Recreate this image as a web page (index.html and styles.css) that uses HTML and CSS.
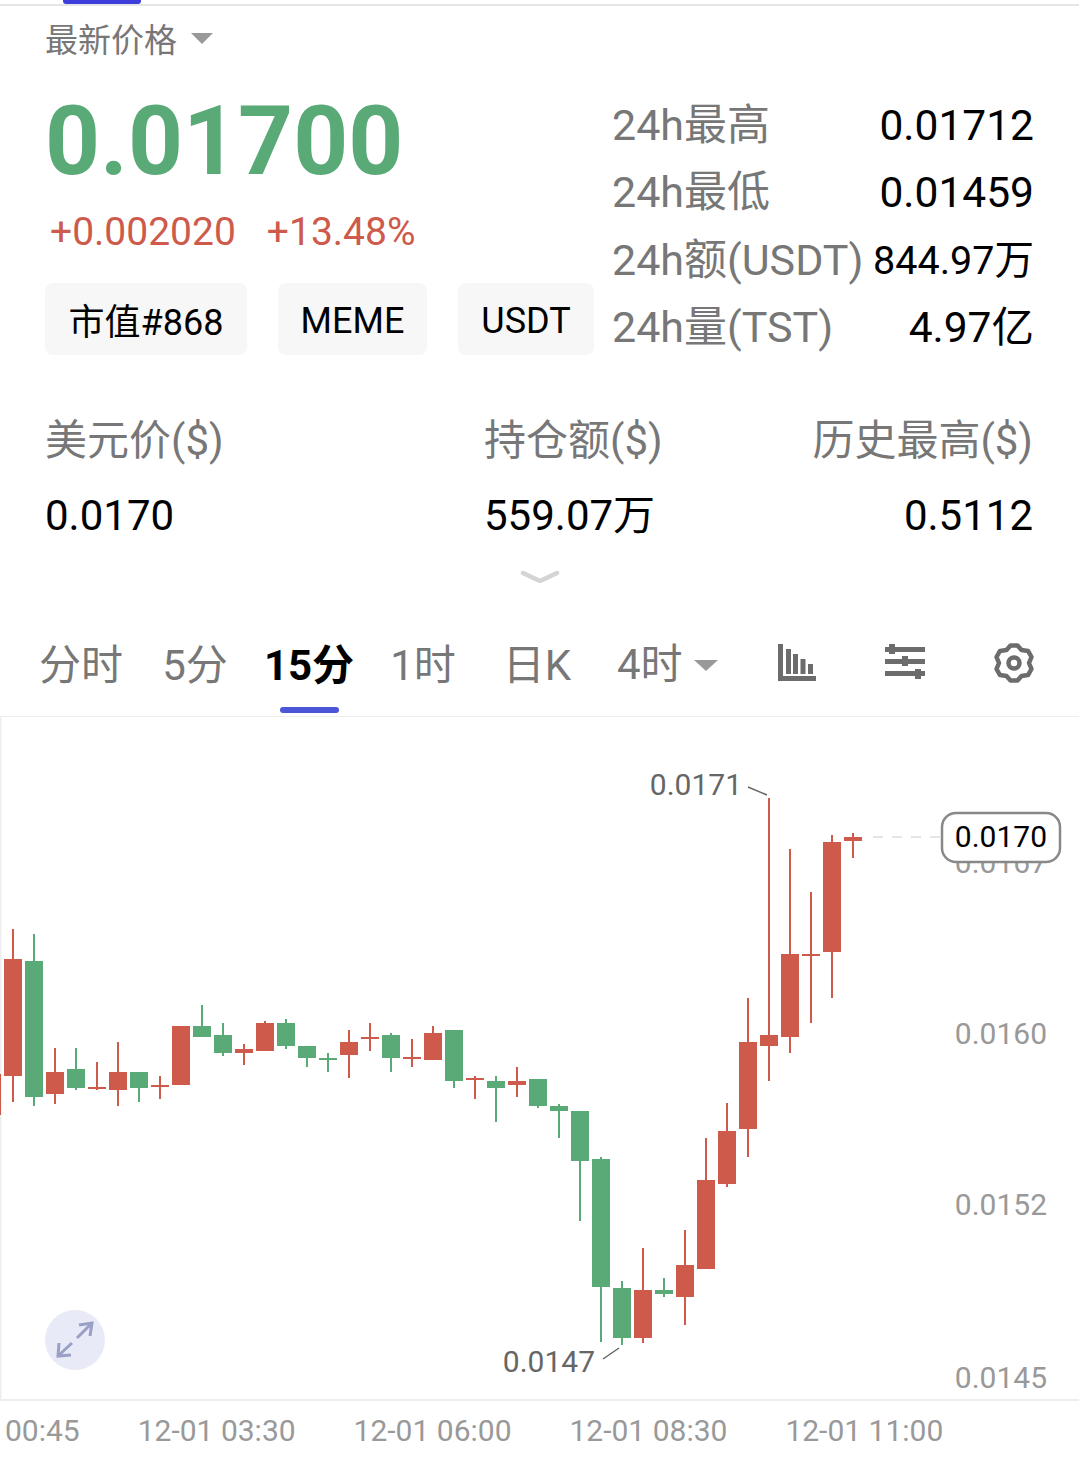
FILE: index.html
```html
<!DOCTYPE html>
<html lang="zh-CN">
  <head>
    <meta charset="UTF-8" />
    <title>TST 行情</title>
    <link rel="stylesheet" href="styles.css">
  </head>
  <body>
    <div class="topbar"><div class="topbar-mark"></div></div>

    <div class="price-type">
      <span>最新价格</span>
      <i class="caret"></i>
    </div>

    <div class="quote">
      <div class="quote-left">
        <div class="last-price">0.01700</div>
        <div class="change">
          <span>+0.002020</span>
          <span>+13.48%</span>
        </div>
        <div class="chips">
          <div class="chip chip-rank">市值#868</div>
          <div class="chip chip-meme">MEME</div>
          <div class="chip chip-usdt">USDT</div>
        </div>
      </div>
      <div class="quote-right">
        <div class="quote-row"><span class="muted">24h最高</span><span>0.01712</span></div>
        <div class="quote-row"><span class="muted">24h最低</span><span>0.01459</span></div>
        <div class="quote-row"><span class="muted">24h额(USDT)</span><span class="value-small">844.97万</span></div>
        <div class="quote-row"><span class="muted">24h量(TST)</span><span>4.97亿</span></div>
      </div>
    </div>

    <div class="stats">
      <div class="stat">
        <div class="muted">美元价($)</div>
        <div class="stat-value">0.0170</div>
      </div>
      <div class="stat">
        <div class="muted">持仓额($)</div>
        <div class="stat-value">559.07万</div>
      </div>
      <div class="stat stat-ath">
        <div class="muted">历史最高($)</div>
        <div class="stat-value">0.5112</div>
      </div>
    </div>

    <svg class="more" width="40" height="12" viewBox="0 0 40 12">
      <path d="M3 2L20 10L37 2" />
    </svg>

    <div class="tabs">
      <div class="tab">分时</div>
      <div class="tab">5分</div>
      <div class="tab tab-active">15分</div>
      <div class="tab">1时</div>
      <div class="tab">日K</div>
      <div class="tab tab-more">4时<i class="caret"></i></div>
      <div class="tab-icons">
        <svg width="38" height="38" viewBox="0 0 38 38" fill="#6c6c6c">
          <path d="M0 0H5V32H38V37H0Z" />
          <rect x="8" y="5" width="5" height="25" />
          <rect x="15" y="10" width="5" height="20" />
          <rect x="22.5" y="15" width="5" height="15" />
          <rect x="30" y="20" width="5" height="10" />
        </svg>
        <svg width="40" height="38" viewBox="0 0 40 38" fill="#6c6c6c">
          <rect x="0" y="3" width="40" height="5" />
          <rect x="4" y="0" width="6" height="10" />
          <rect x="0" y="15" width="40" height="5" />
          <rect x="17" y="12" width="6" height="10" />
          <rect x="0" y="27" width="40" height="5" />
          <rect x="30" y="25" width="6" height="10" />
        </svg>
        <svg width="40" height="40" viewBox="0 0 40 40" fill="none" stroke="#6c6c6c" stroke-width="4.5" stroke-linejoin="round">
          <polygon points="16.5,2.5 23.5,2.5 27.5,7 34,7.9 37.5,14 35,20 37.5,26 34,32.1 27.5,33 23.5,37.5 16.5,37.5 12.5,33 6,32.1 2.5,26 5,20 2.5,14 6,7.9 12.5,7" />
          <circle cx="20" cy="20" r="5.5" />
        </svg>
      </div>
    </div>

    <svg class="chart" width="1079" height="684" viewBox="0 717 1079 684">
      <path class="frame" d="M0.5 717V1400M0 1400H1079" />

      <!-- 价格轴 -->
      <g class="axis">
        <text x="1047" y="873">0.0167</text>
        <text x="1047" y="1044">0.0160</text>
        <text x="1047" y="1215">0.0152</text>
        <text x="1047" y="1388">0.0145</text>
      </g>

      <!-- 涨 -->
      <g class="rise">
        <path d="M0 1074V1115M13 929V1102M55 1048V1104M97 1062V1090M118 1042V1106M160 1076V1099M244 1044V1065M265 1021V1051M349 1030V1078M370 1023V1051M412 1039V1067M433 1026V1060M475 1076V1099M517 1067V1097M643 1248V1343M685 1230V1325M706 1138V1269M727 1103V1187M748 998V1157M769 798V1081M790 849V1053M811 892V1023M832 835V998M853 833V858" />
        <rect x="-8" y="1075" width="9" height="1" />
        <rect x="4" y="959" width="18" height="117" />
        <rect x="46" y="1072" width="18" height="22" />
        <rect x="88" y="1087" width="18" height="2" />
        <rect x="109" y="1072" width="18" height="18" />
        <rect x="151" y="1085" width="18" height="2" />
        <rect x="172" y="1026" width="18" height="59" />
        <rect x="235" y="1049" width="18" height="4" />
        <rect x="256" y="1023" width="18" height="28" />
        <rect x="340" y="1042" width="18" height="13" />
        <rect x="361" y="1037" width="18" height="2" />
        <rect x="403" y="1057" width="18" height="2" />
        <rect x="424" y="1033" width="18" height="27" />
        <rect x="466" y="1078" width="18" height="2" />
        <rect x="508" y="1081" width="18" height="4" />
        <rect x="634" y="1290" width="18" height="48" />
        <rect x="676" y="1265" width="18" height="32" />
        <rect x="697" y="1180" width="18" height="89" />
        <rect x="718" y="1131" width="18" height="53" />
        <rect x="739" y="1042" width="18" height="87" />
        <rect x="760" y="1035" width="18" height="11" />
        <rect x="781" y="954" width="18" height="83" />
        <rect x="802" y="954" width="18" height="2" />
        <rect x="823" y="842" width="18" height="110" />
        <rect x="844" y="837" width="18" height="4" />
      </g>

      <!-- 跌 -->
      <g class="fall">
        <path d="M34 934V1106M76 1048V1090M139 1072V1102M202 1005V1037M223 1023V1056M286 1019V1049M307 1046V1067M328 1053V1072M391 1033V1072M454 1030V1088M496 1076V1122M538 1079V1108M559 1104V1138M580 1111V1221M601 1157V1342M622 1281V1345M664 1278V1297" />
        <rect x="25" y="961" width="18" height="136" />
        <rect x="67" y="1069" width="18" height="19" />
        <rect x="130" y="1072" width="18" height="16" />
        <rect x="193" y="1026" width="18" height="11" />
        <rect x="214" y="1035" width="18" height="18" />
        <rect x="277" y="1023" width="18" height="23" />
        <rect x="298" y="1046" width="18" height="12" />
        <rect x="319" y="1058" width="18" height="2" />
        <rect x="382" y="1035" width="18" height="23" />
        <rect x="445" y="1030" width="18" height="51" />
        <rect x="487" y="1081" width="18" height="7" />
        <rect x="529" y="1079" width="18" height="27" />
        <rect x="550" y="1106" width="18" height="5" />
        <rect x="571" y="1111" width="18" height="50" />
        <rect x="592" y="1159" width="18" height="128" />
        <rect x="613" y="1288" width="18" height="50" />
        <rect x="655" y="1290" width="18" height="4" />
      </g>

      <!-- 高低点标记 -->
      <g class="extreme">
        <path d="M748 787L767 795M603 1359L619 1348" />
        <text x="742" y="795">0.0171</text>
        <text x="595" y="1372">0.0147</text>
      </g>

      <!-- 当前价 -->
      <path class="last-line" d="M873 837H941" />
      <rect class="last-box" x="942" y="813" width="118" height="49" rx="14" />
      <text class="last-text" x="1047" y="847">0.0170</text>

      <!-- 全屏按钮 -->
      <circle class="expand" cx="75" cy="1340" r="30" />
      <path class="expand-arrow" d="M92 1323L77 1338M72 1343L58 1356M79 1325L92 1323L90 1336M59 1343L58 1356L71 1355" />
    </svg>

    <div class="times">
      <span>00:45</span>
      <span>12-01 03:30</span>
      <span>12-01 06:00</span>
      <span>12-01 08:30</span>
      <span>12-01 11:00</span>
    </div>
  </body>
</html>
```

FILE: styles.css
```css
* {
  box-sizing: border-box;
}
html,
body {
  margin: 0;
  height: 1473px;
  overflow: hidden;
  background-color: #fff;
}
body {
  font-family: Roboto, "Noto Sans CJK SC", sans-serif;
  color: #000;
}
.muted {
  color: #777;
  font-size: 43px;
}
.caret {
  display: inline-block;
  width: 0;
  height: 0;
  border-left: 11px solid transparent;
  border-right: 11px solid transparent;
  border-top: 11px solid #999;
}

/* 顶部 */
.topbar {
  height: 6px;
  border-bottom: 2px solid #e6e6e6;
}
.topbar-mark {
  width: 78px;
  height: 4px;
  margin-left: 63px;
  background-color: #3d3ddb;
  border-radius: 0 0 3px 3px;
}
.price-type {
  display: flex;
  align-items: center;
  gap: 14px;
  height: 68px;
  padding: 0 0 4px 45px;
  font-size: 33px;
  color: #777;
}

/* 最新价 */
.quote {
  display: flex;
  justify-content: space-between;
  height: 281px;
  padding: 0 45px;
}
.last-price {
  margin-top: 11px;
  font-size: 96px;
  line-height: 112px;
  font-weight: 700;
  color: #5aaa78;
}
.change {
  display: flex;
  gap: 31px;
  margin-top: 10px;
  padding-left: 5px;
  font-size: 39px;
  line-height: 50px;
  color: #cd5a4a;
}
.chips {
  display: flex;
  gap: 31px;
  margin-top: 26px;
}
.chip {
  display: flex;
  align-items: center;
  justify-content: center;
  height: 72px;
  font-size: 36px;
  background-color: #f7f7f7;
  border-radius: 8px;
}
.chip-rank {
  width: 202px;
}
.chip-meme {
  width: 149px;
  padding-top: 3px;
}
.chip-usdt {
  width: 136px;
  padding-top: 3px;
}
.quote-right {
  width: 422px;
  padding-top: 18px;
  font-size: 42.5px;
}
.quote-row {
  display: flex;
  justify-content: space-between;
  height: 67.3px;
  line-height: 67.3px;
}
.value-small {
  font-size: 39.5px;
}

/* 三项数据 */
.stats {
  display: grid;
  grid-template-columns: 439px 1fr auto;
  height: 190px;
  padding: 56px 46px 0 45px;
  font-size: 42px;
  line-height: 60px;
}
.stats .muted {
  font-size: 42px;
}
.stat-value {
  margin-top: 15px;
}
.stat-ath {
  text-align: right;
}
.more {
  display: block;
  margin: 26px auto 0;
}
.more path {
  fill: none;
  stroke: #d4d4d4;
  stroke-width: 4.5;
  stroke-linecap: round;
}

/* 周期切换 */
.tabs {
  display: flex;
  height: 92px;
  margin-top: 42px;
  padding: 0 45px 0 24px;
  border-bottom: 1px solid #eee;
  font-size: 42px;
  color: #777;
}
.tab {
  position: relative;
  flex: 0 0 114px;
  height: 80px;
  line-height: 82px;
  text-align: center;
  white-space: nowrap;
}
.tab-active {
  font-weight: 700;
  color: #000;
}
.tab-active::after {
  content: "";
  position: absolute;
  left: 28px;
  top: 82px;
  width: 59px;
  height: 6px;
  border-radius: 3px;
  background-color: #4a56d6;
}
.tab-more {
  display: flex;
  align-items: center;
  gap: 11px;
  padding-left: 23px;
}
.tab-more .caret {
  border-left-width: 12px;
  border-right-width: 12px;
}
.tab-icons {
  display: flex;
  align-items: center;
  gap: 69px;
  height: 76px;
  margin-left: auto;
}

/* K线图 */
.chart {
  display: block;
  font-family: Roboto, sans-serif;
}
.frame {
  fill: none;
  stroke: #eee;
  stroke-width: 2;
}
.axis text {
  font-size: 30px;
  fill: #999;
  text-anchor: end;
}
.rise {
  fill: #cd5a4a;
}
.rise path {
  fill: none;
  stroke: #cd5a4a;
  stroke-width: 2;
}
.fall {
  fill: #5aaa78;
}
.fall path {
  fill: none;
  stroke: #5aaa78;
  stroke-width: 2;
}
.extreme path {
  fill: none;
  stroke: #666;
  stroke-width: 1.5;
}
.extreme text {
  font-size: 30px;
  fill: #666;
  text-anchor: end;
}
.last-line {
  fill: none;
  stroke: #ddd;
  stroke-width: 1.5;
  stroke-dasharray: 10 9;
}
.last-box {
  fill: #fff;
  stroke: #888;
  stroke-width: 2.5;
}
.last-text {
  font-size: 30px;
  fill: #000;
  text-anchor: end;
}
.expand {
  fill: #e9eaf7;
}
.expand-arrow {
  fill: none;
  stroke: #9a9fc6;
  stroke-width: 3;
}

/* 时间轴 */
.times {
  display: flex;
  gap: 58px;
  height: 72px;
  padding: 12px 0 0 5px;
  font-size: 30px;
  line-height: 36px;
  color: #999;
  white-space: nowrap;
}
```
